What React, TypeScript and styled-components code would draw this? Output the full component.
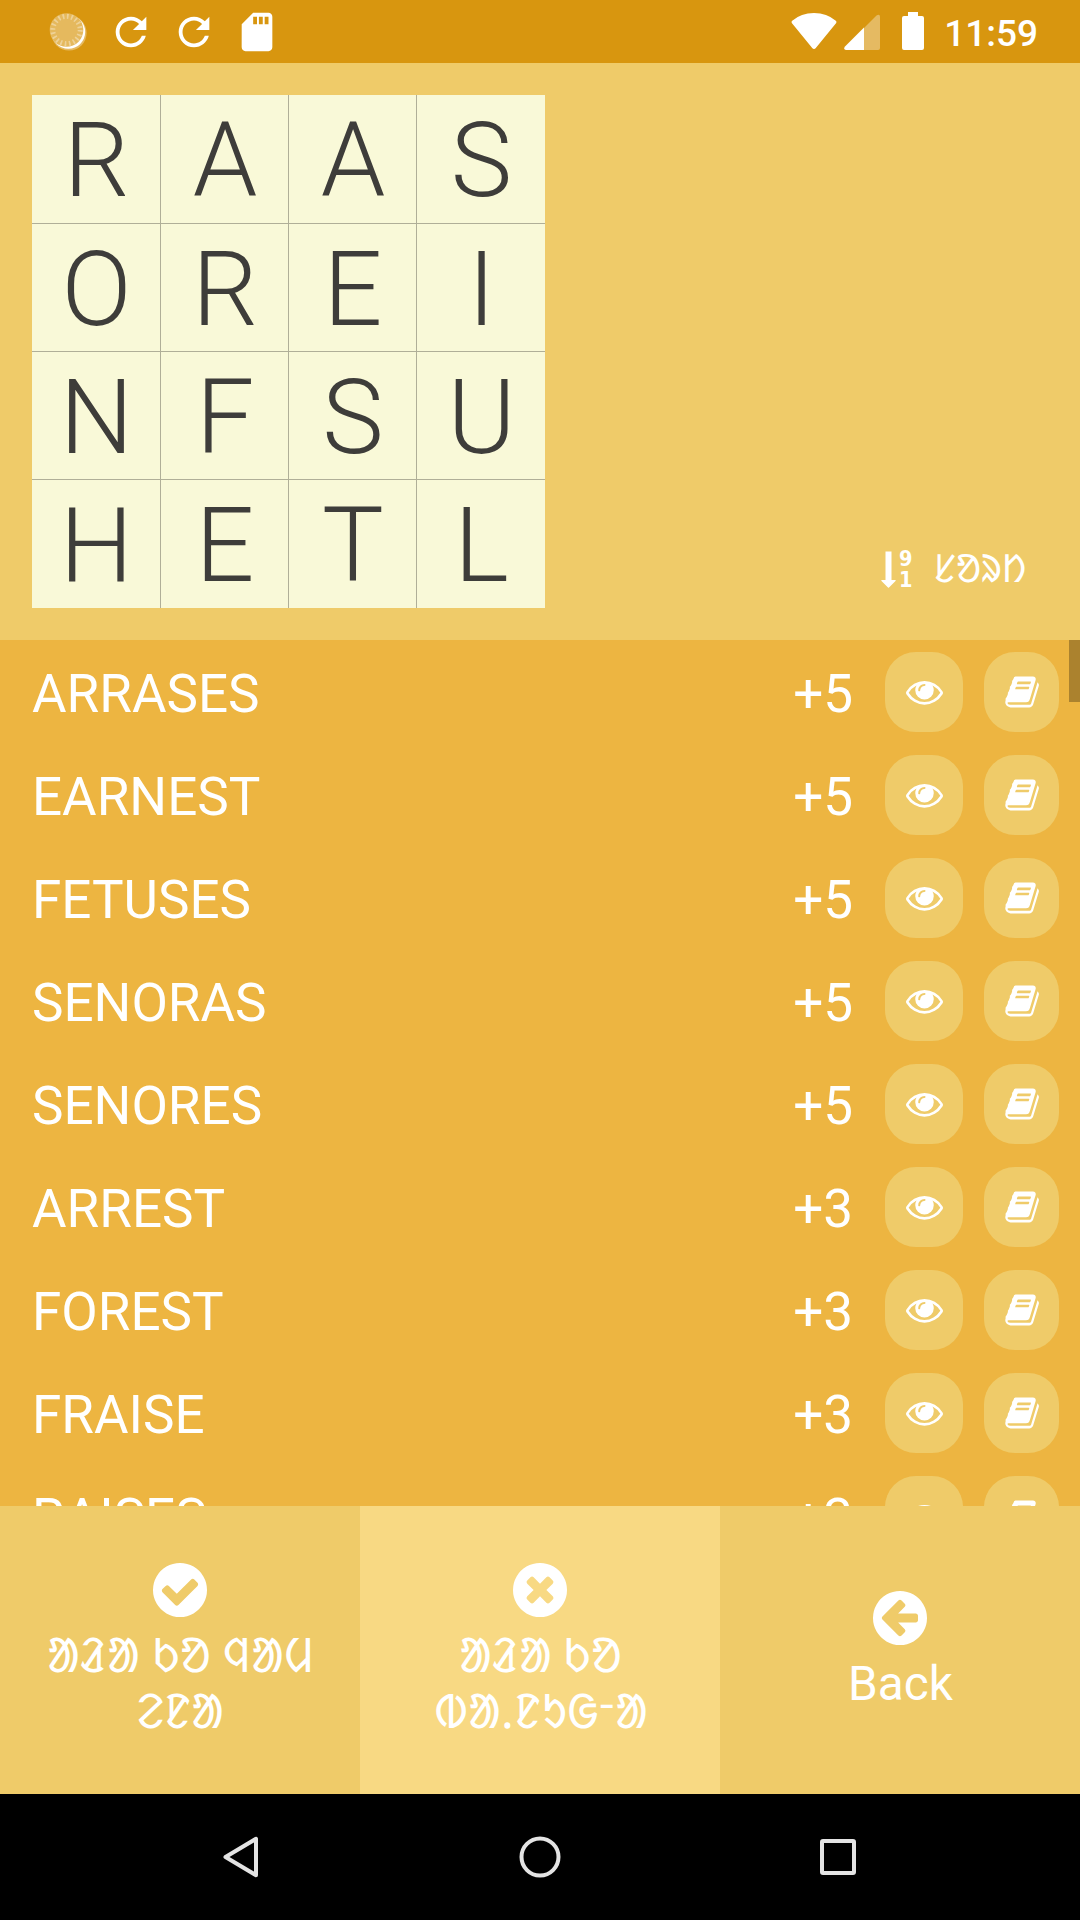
import React from 'react';
import styled, { createGlobalStyle } from 'styled-components';

const color = {
  status: '#d8960f',
  panel: '#efcb69',
  list: '#edb541',
  tile: '#f9f9d8',
  line: '#b0af98',
  ink: '#3e3d3a',
  active: '#f8d983',
  thumb: '#ab822e',
};

const GlobalStyle = createGlobalStyle`
  * { box-sizing: border-box; }
  body {
    margin: 0;
    background: #000;
    font-family: Roboto, "Noto Sans", sans-serif;
  }
`;

const Screen = styled.div`
  display: flex;
  flex-direction: column;
  width: 1080px;
  height: 1920px;
  overflow: hidden;
  color: #fff;
`;

const StatusBar = styled.header`
  display: flex;
  justify-content: space-between;
  flex: 0 0 63px;
  padding: 0 42px 0 45px;
  background: ${color.status};
`;

const StatusIcons = styled.div`
  display: flex;
  align-items: center;
  gap: 17px;
`;

const SystemIcons = styled.div`
  display: flex;
  align-items: flex-start;
  height: 63px;
`;

const Glyph = styled.svg<{ $w: number; $h?: number; $ml?: number }>`
  display: block;
  flex: none;
  width: ${p => p.$w}px;
  height: ${p => p.$h ?? p.$w}px;
  margin-left: ${p => p.$ml ?? 0}px;
  fill: currentColor;
`;

const Clock = styled.span`
  margin-left: 20px;
  font-size: 37px;
  font-weight: 500;
  line-height: 67px;
`;

const BoardPanel = styled.section`
  display: flex;
  justify-content: space-between;
  align-items: flex-end;
  flex: 0 0 577px;
  padding: 32px;
  background: ${color.panel};
`;

const Board = styled.div`
  display: grid;
  grid-template-columns: 129px repeat(3, 128px);
  grid-template-rows: 129px repeat(3, 128px);
  width: 513px;
  height: 513px;
  background: ${color.tile};
`;

const Tile = styled.div<{ $right: boolean; $bottom: boolean }>`
  display: flex;
  align-items: center;
  justify-content: center;
  border-right: ${p => (p.$right ? `1px solid ${color.line}` : 'none')};
  border-bottom: ${p => (p.$bottom ? `1px solid ${color.line}` : 'none')};
  padding: 4px 0 0 1px;
  color: ${color.ink};
  font-size: 103.5px;
  font-weight: 300;
  line-height: 120px;
`;

const SortButton = styled.div`
  display: flex;
  align-items: center;
  height: 60px;
  margin: 0 22px 9px 0;
`;

const SortDigits = styled.span`
  display: flex;
  flex-direction: column;
  width: 14px;
  margin: -1px 0 0 3px;
  font: 700 21.5px/21px "DejaVu Sans Condensed", "DejaVu Sans", sans-serif;
`;

const SortLabel = styled.span`
  margin-left: 20px;
  font-size: 38.8px;
  line-height: 60px;
`;

const ListArea = styled.main`
  display: flex;
  flex: 0 0 866px;
  background: ${color.list};
  overflow: hidden;
`;

const WordList = styled.ul`
  flex: 1;
  margin: 0;
  padding: 0 10px 0 32px;
  list-style: none;
`;

const WordRow = styled.li`
  display: flex;
  align-items: center;
  height: 103px;
  font-size: 53px;
`;

const Word = styled.span`
  flex: 1;
  padding-top: 4px;
`;

const Score = styled.span`
  margin-right: 32px;
  padding-top: 4px;
`;

const RoundButton = styled.button<{ $w: number }>`
  display: flex;
  align-items: center;
  justify-content: center;
  width: ${p => p.$w}px;
  height: 80px;
  margin: 0 0 0 ${p => (p.$w === 75 ? 21 : 0)}px;
  padding: 0;
  border: 0;
  border-radius: 31px;
  background: ${color.panel};
  color: #fff;
`;

const ScrollThumb = styled.div`
  width: 11px;
  height: 62px;
  background: ${color.thumb};
`;

const TabBar = styled.nav`
  display: grid;
  grid-template-columns: repeat(3, 1fr);
  flex: 0 0 288px;
`;

const Tab = styled.button<{ $active?: boolean }>`
  display: flex;
  flex-direction: column;
  align-items: center;
  justify-content: center;
  gap: 6px;
  padding: 0 0 2px;
  border: 0;
  background: ${p => (p.$active ? color.active : color.panel)};
  color: #fff;
  font: 400 47.7px/56px Roboto, "Noto Sans", sans-serif;
`;

const TabLabel = styled.span`
  padding-left: 1px;
  white-space: pre-line;
  text-align: center;
`;

const NavBar = styled.footer`
  flex: 0 0 126px;
  display: grid;
  grid-template-columns: 482px 116px 480px;
  align-items: center;
  justify-items: center;
  background: #000;
  color: #e4e4e4;
`;

const paths = {
  refresh:
    'M17.65 6.35C16.2 4.9 14.21 4 12 4c-4.42 0-7.99 3.58-7.99 8s3.57 8 7.99 8c3.73 0 6.84-2.55 7.73-6h-2.08c-.82 2.33-3.04 4-5.65 4-3.31 0-6-2.69-6-6s2.69-6 6-6c1.66 0 3.14.69 4.22 1.78L13 11h7V4l-2.35 2.35z',
  card: 'M18 2h-8L4.02 8 4 20c0 1.1.9 2 2 2h12c1.1 0 2-.9 2-2V4c0-1.1-.9-2-2-2zm-6 6h-2V4h2v4zm3 0h-2V4h2v4zm3 0h-2V4h2v4z',
  eye: 'M1664 960q-152-236-381-353 61 104 61 225 0 185-131.5 316.5t-316.5 131.5-316.5-131.5-131.5-316.5q0-121 61-225-229 117-381 353 133 205 333.5 326.5t434.5 121.5 434.5-121.5 333.5-326.5zm-720-384q0-20-14-34t-34-14q-125 0-214.5 89.5t-89.5 214.5q0 20 14 34t34 14 34-14 14-34q0-86 61-147t147-61q20 0 34-14t14-34zm848 384q0 34-20 69-140 230-376.5 368.5t-499.5 138.5-499.5-139-376.5-368q-20-35-20-69t20-69q140-229 376.5-368t499.5-139 499.5 139 376.5 368q20 35 20 69z',
  book: 'M1703 478q40 57 18 129l-275 906q-19 64-76.5 107.5t-122.5 43.5h-923q-77 0-148.5-53.5t-99.5-131.5q-24-67-2-127 0-4 3-27t4-37q1-8-3-21.5t-3-19.5q2-11 8-21t16.5-23.5 16.5-23.5q23-38 45-91.5t30-91.5q3-10 .5-30t-.5-28q3-11 17-28t17-23q21-36 42-92t25-90q1-9-2.5-32t.5-28q4-13 22-30.5t22-22.5q19-26 42.5-84.5t27.5-96.5q1-8-3-25.5t-2-26.5q2-8 9-18t18-23 17-21q8-12 16.5-30.5t15-35 16-36 19.5-32 26.5-23.5 36-11.5 47.5 5.5l-1 3q38-9 51-9h761q74 0 114 56t18 130l-274 906q-36 119-71.5 153.5t-128.5 34.5h-869q-27 0-38 15-11 16-1 43 24 70 144 70h923q29 0 56-15.5t35-41.5l300-987q7-22 5-57 38 15 59 43zm-1064 2q-4 13 2 22.5t20 9.5h608q13 0 25.5-9.5t16.5-22.5l21-64q4-13-2-22.5t-20-9.5h-608q-13 0-25.5 9.5t-16.5 22.5zm-83 256q-4 13 2 22.5t20 9.5h608q13 0 25.5-9.5t16.5-22.5l21-64q4-13-2-22.5t-20-9.5h-608q-13 0-25.5 9.5t-16.5 22.5z',
  check:
    'M1412 734q0-28-18-46l-91-90q-19-19-45-19t-45 19l-408 407-226-226q-19-19-45-19t-45 19l-91 90q-18 18-18 46 0 27 18 45l362 362q19 19 45 19 27 0 46-19l543-543q18-18 18-45zm252 162q0 209-103 385.5t-279.5 279.5-385.5 103-385.5-103-279.5-279.5-103-385.5 103-385.5 279.5-279.5 385.5-103 385.5 103 279.5 279.5 103 385.5z',
  times:
    'M1277 1122q0-26-19-45l-181-181 181-181q19-19 19-45 0-27-19-46l-90-90q-19-19-46-19-26 0-45 19l-181 181-181-181q-19-19-45-19-27 0-46 19l-90 90q-19 19-19 46 0 26 19 45l181 181-181 181q-19 19-19 45 0 27 19 46l90 90q19 19 46 19 26 0 45-19l181-181 181 181q19 19 45 19 27 0 46-19l90-90q19-19 19-46zm387-226q0 209-103 385.5t-279.5 279.5-385.5 103-385.5-103-279.5-279.5-103-385.5 103-385.5 279.5-279.5 385.5-103 385.5 103 279.5 279.5 103 385.5z',
  back: 'M1408 960v-128q0-26-19-45t-45-19h-502l189-189q19-19 19-45t-19-45l-91-91q-18-18-45-18t-45 18l-362 362-91 91q-18 18-18 45t18 45l91 91 362 362q18 18 45 18t45-18l91-91q18-18 18-45t-18-45l-189-189h502q26 0 45-19t19-45zm256-64q0 209-103 385.5t-279.5 279.5-385.5 103-385.5-103-279.5-279.5-103-385.5 103-385.5 279.5-279.5 385.5-103 385.5 103 279.5 279.5 103 385.5z',
};

const AwesomeIcon = ({ d, size, box = '0 0 1792 1792' }: { d: string; size: number; box?: string }) => (
  <Glyph $w={size} viewBox={box}>
    <path d={d} />
  </Glyph>
);

const MaterialIcon = ({ d }: { d: string }) => (
  <Glyph $w={46} viewBox="0 0 24 24">
    <path d={d} />
  </Glyph>
);

const SpinnerIcon = () => (
  <Glyph $w={46} viewBox="0 0 46 46">
    <circle cx="24" cy="24" r="17.6" opacity="0.35" />
    <circle cx="23.4" cy="23" r="16.8" />
    <circle cx="21.5" cy="21" r="16.8" fill="#e5b95e" />
    <circle
      cx="21.5"
      cy="21"
      r="13.7"
      fill="none"
      stroke="#fff"
      strokeOpacity="0.36"
      strokeWidth="5"
      strokeDasharray="1.7 2.604"
    />
  </Glyph>
);

const board = ['RAAS', 'OREI', 'NFSU', 'HETL'];

const words: [string, number][] = [
  ['ARRASES', 5],
  ['EARNEST', 5],
  ['FETUSES', 5],
  ['SENORAS', 5],
  ['SENORES', 5],
  ['ARREST', 3],
  ['FOREST', 3],
  ['FRAISE', 3],
  ['RAISES', 3],
];

const tabs = [
  { icon: paths.check, label: 'ᱟᱲᱟ ᱠᱚ ᱧᱟᱢ\nᱮᱱᱟ' },
  { icon: paths.times, label: 'ᱟᱲᱟ ᱠᱚ\nᱵᱟᱹᱱᱩᱜᱼᱟ', active: true },
  { icon: paths.back, label: 'Back' },
];

export default function App() {
  return (
    <Screen>
      <GlobalStyle />
      <StatusBar>
        <StatusIcons>
          <SpinnerIcon />
          <MaterialIcon d={paths.refresh} />
          <MaterialIcon d={paths.refresh} />
          <MaterialIcon d={paths.card} />
        </StatusIcons>
        <SystemIcons>
          <Glyph $w={46} $h={63} viewBox="0 0 46 63">
            <path d="M23 49Q22 49 21 47.800L0.800 23Q0 21.800 1.200 20.800Q10 13 23 13T44.800 20.800Q46 21.800 45.200 23L25 47.800Q24 49 23 49Z" />
          </Glyph>
          <Glyph $w={36} $h={63} $ml={7} viewBox="0 0 36 63">
            <path opacity="0.35" d="M20 28L32.500 15.500Q36 13.500 36 17V48Q36 50 34 50H20Z" />
            <path d="M20 27.500V50H2Q-1 49.500 1 46.500Z" />
          </Glyph>
          <Glyph $w={22} $h={63} $ml={22} viewBox="0 0 22 63">
            <path d="M6 12H16V16H20Q22 16 22 18V48Q22 50 20 50H2Q0 50 0 48V18Q0 16 2 16H6Z" />
          </Glyph>
          <Clock>11:59</Clock>
        </SystemIcons>
      </StatusBar>

      <BoardPanel>
        <Board>
          {board.flatMap((row, r) =>
            row.split('').map((letter, c) => (
              <Tile key={`${r}${c}`} $right={c < 3} $bottom={r < 3}>
                {letter}
              </Tile>
            )),
          )}
        </Board>
        <SortButton>
          <Glyph $w={15} $h={37} viewBox="0 0 15 37">
            <path d="M4.500 0.500H10.500V29H14.500Q15 29.500 14.500 30L8 36.500Q7.500 37 7 36.500L0.500 30Q0 29.500 0.500 29H4.500Z" />
          </Glyph>
          <SortDigits>
            <span>9</span>
            <span>1</span>
          </SortDigits>
          <SortLabel>ᱥᱚᱨᱴ</SortLabel>
        </SortButton>
      </BoardPanel>

      <ListArea>
        <WordList>
          {words.map(([word, score]) => (
            <WordRow key={word}>
              <Word>{word}</Word>
              <Score>+{score}</Score>
              <RoundButton $w={78}>
                <AwesomeIcon d={paths.eye} size={37} />
              </RoundButton>
              <RoundButton $w={75}>
                <AwesomeIcon d={paths.book} size={37} box="-50 -40 1832 1832" />
              </RoundButton>
            </WordRow>
          ))}
        </WordList>
        <ScrollThumb />
      </ListArea>

      <TabBar>
        {tabs.map(tab => (
          <Tab key={tab.label} $active={tab.active}>
            <AwesomeIcon d={tab.icon} size={64} box="-14 -14 1820 1820" />
            <TabLabel>{tab.label}</TabLabel>
          </Tab>
        ))}
      </TabBar>

      <NavBar>
        <Glyph $w={36} $h={42} viewBox="0 0 36 42">
          <path d="M2.500 21L33 2.800V39.200Z" fill="none" stroke="currentColor" strokeWidth="4" strokeLinejoin="round" />
        </Glyph>
        <Glyph $w={42} viewBox="0 0 42 42">
          <circle cx="21" cy="21" r="18.500" fill="none" stroke="currentColor" strokeWidth="4" />
        </Glyph>
        <Glyph $w={36} viewBox="0 0 36 36">
          <rect x="2" y="2" width="32" height="32" rx="1" fill="none" stroke="currentColor" strokeWidth="4" />
        </Glyph>
      </NavBar>
    </Screen>
  );
}
